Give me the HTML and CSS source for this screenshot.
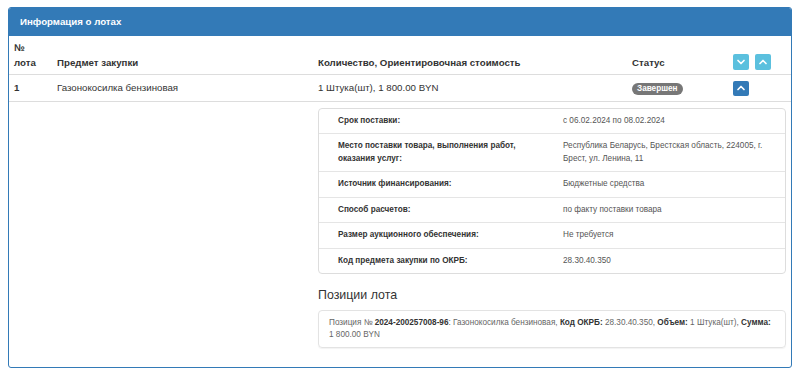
FILE: index.html
```html
<!DOCTYPE html>
<html lang="ru">
<head>
    <meta charset="UTF-8">
    <meta name="viewport" content="width=device-width, initial-scale=1.0">
    <title>Информация о лотах</title>
    <link rel="stylesheet" href="styles.css">
</head>
<body>
    <div class="panel">
        <div class="panel-heading">Информация о лотах</div>

        <table class="lots">
            <colgroup>
                <col class="c-num">
                <col class="c-subject">
                <col class="c-amount">
                <col class="c-status">
                <col class="c-actions">
            </colgroup>
            <thead>
                <tr>
                    <th>№<br>лота</th>
                    <th>Предмет закупки</th>
                    <th>Количество, Ориентировочная стоимость</th>
                    <th>Статус</th>
                    <th>
                        <span class="btn btn-info">
                            <svg viewBox="0 0 16 16"><polyline points="5,6.5 8,9.5 11,6.5"/></svg>
                        </span><span class="btn btn-info">
                            <svg viewBox="0 0 16 16"><polyline points="5,9.5 8,6.5 11,9.5"/></svg>
                        </span>
                    </th>
                </tr>
            </thead>
            <tbody>
                <tr class="lot-row">
                    <td><b>1</b></td>
                    <td>Газонокосилка бензиновая</td>
                    <td>1 Штука(шт), 1 800.00 BYN</td>
                    <td><span class="badge">Завершен</span></td>
                    <td>
                        <span class="btn btn-primary">
                            <svg viewBox="0 0 16 15"><polyline points="5,8.5 8,5.5 11,8.5"/></svg>
                        </span>
                    </td>
                </tr>
                <tr class="detail-row">
                    <td colspan="2"></td>
                    <td colspan="3" class="detail-cell">
                        <div class="details">
                            <div class="d-row">
                                <div class="d-label">Срок поставки:</div>
                                <div class="d-value">с 06.02.2024 по 08.02.2024</div>
                            </div>
                            <div class="d-row">
                                <div class="d-label">Место поставки товара, выполнения работ, оказания услуг:</div>
                                <div class="d-value">Республика Беларусь, Брестская область, 224005, г. Брест, ул. Ленина, 11</div>
                            </div>
                            <div class="d-row">
                                <div class="d-label">Источник финансирования:</div>
                                <div class="d-value">Бюджетные средства</div>
                            </div>
                            <div class="d-row">
                                <div class="d-label">Способ расчетов:</div>
                                <div class="d-value">по факту поставки товара</div>
                            </div>
                            <div class="d-row">
                                <div class="d-label">Размер аукционного обеспечения:</div>
                                <div class="d-value">Не требуется</div>
                            </div>
                            <div class="d-row">
                                <div class="d-label">Код предмета закупки по ОКРБ:</div>
                                <div class="d-value">28.30.40.350</div>
                            </div>
                        </div>

                        <h4 class="positions-title">Позиции лота</h4>
                        <div class="position">
                            Позиция № <b>2024-200257008-96</b>: Газонокосилка бензиновая, <b>Код ОКРБ:</b> 28.30.40.350, <b>Объем:</b> 1 Штука(шт), <b>Сумма:</b> 1&nbsp;800.00&nbsp;BYN
                        </div>
                    </td>
                </tr>
            </tbody>
        </table>
    </div>
</body>
</html>
```

FILE: styles.css
```css
body {
    margin: 7px 8px;
    font-family: 'Liberation Sans', Arial, sans-serif;
    font-size: 9.7px;
    color: #333;
    background-color: #fff;
}

.panel {
    border: 1px solid #337ab7;
    border-radius: 3px;
    overflow: hidden;
}

.panel-heading {
    background-color: #337ab7;
    color: #fff;
    font-weight: bold;
    font-size: 9.7px;
    line-height: 14px;
    padding: 7px 11px;
}

.lots {
    width: 100%;
    border-collapse: collapse;
    table-layout: fixed;
}

.c-num { width: 43px; }
.c-subject { width: 261px; }
.c-amount { width: 314px; }
.c-status { width: 101px; }
.c-actions { width: 63px; }

.lots th {
    text-align: left;
    vertical-align: bottom;
    font-weight: bold;
    line-height: 15px;
    padding: 4px 5px;
    border-bottom: 1px solid #ddd;
}

.lot-row td {
    line-height: 15px;
    padding: 5px 5px;
    border-bottom: 1px solid #ddd;
    vertical-align: middle;
}

.btn {
    display: inline-block;
    width: 16px;
    height: 16px;
    box-sizing: border-box;
    border-radius: 2px;
    vertical-align: middle;
}

.btn + .btn {
    margin-left: 6px;
}

.btn svg {
    display: block;
    width: 100%;
    height: 100%;
    fill: none;
    stroke: #fff;
    stroke-width: 1.7;
    stroke-linecap: round;
    stroke-linejoin: round;
}

.btn-info {
    background-color: #5bc0de;
}

.btn-primary {
    background-color: #337ab7;
    height: 15px;
}

.badge {
    display: inline-block;
    background-color: #777;
    color: #fff;
    font-size: 8.2px;
    font-weight: bold;
    line-height: 12px;
    padding: 0 5px;
    border-radius: 6px;
    vertical-align: middle;
}

.detail-cell {
    padding: 6px 5px 19px;
    vertical-align: top;
}

.details {
    border: 1px solid #ddd;
    border-radius: 4px;
}

.d-row {
    display: grid;
    grid-template-columns: 244px 1fr;
    font-size: 8.2px;
    line-height: 12.5px;
    padding: 6px 0;
}

.d-row + .d-row {
    border-top: 1px solid #e5e5e5;
}

.d-label {
    font-weight: bold;
    color: #333;
    padding: 0 30px 0 19px;
}

.d-value {
    color: #555;
    padding-right: 16px;
}

.positions-title {
    font-size: 12.4px;
    font-weight: normal;
    line-height: 16px;
    margin: 13px 0 7px;
    color: #333;
}

.position {
    border: 1px solid #e3e3e3;
    border-radius: 4px;
    box-shadow: 0 1px 1px rgba(0, 0, 0, 0.05);
    padding: 6px 10px;
    font-size: 8.2px;
    line-height: 12px;
    color: #666;
}

.position b {
    color: #333;
}
```
